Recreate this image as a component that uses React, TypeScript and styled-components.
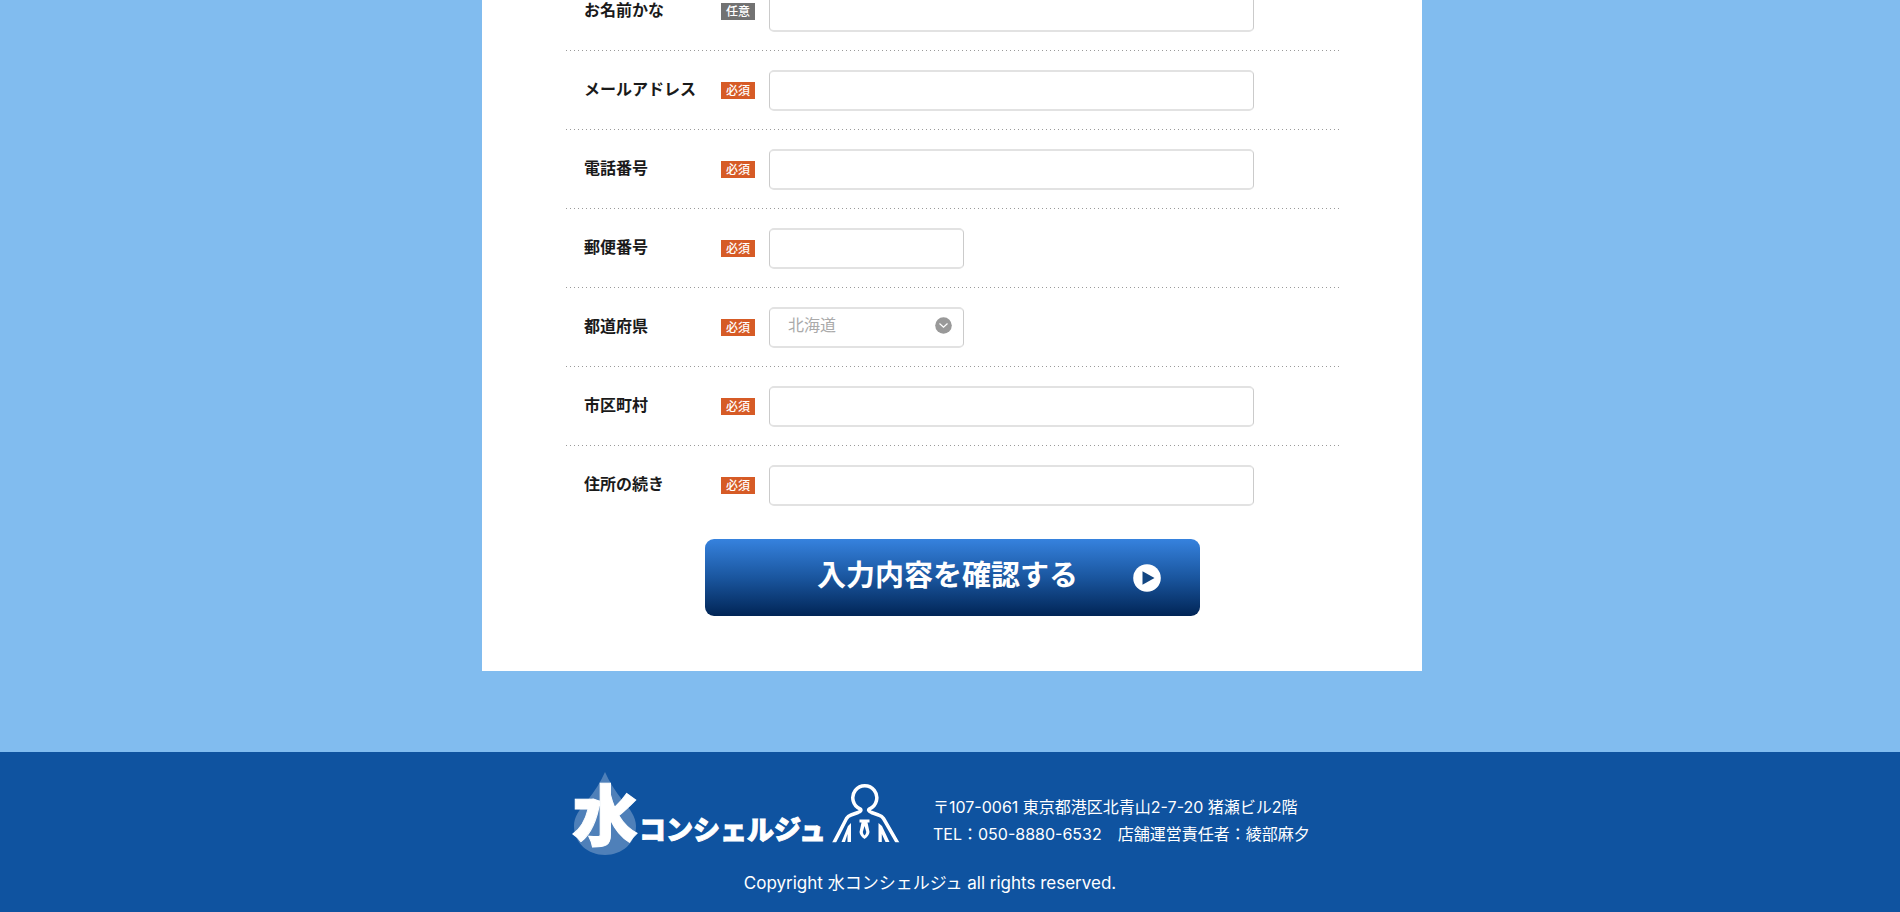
import React from "react";
import styled, { createGlobalStyle } from "styled-components";

const GlobalStyle = createGlobalStyle`
  *, *::before, *::after { box-sizing: border-box; }
  body {
    margin: 0;
    background: #81bcef;
    color: #1a1a1a;
    font-family: Inter, "Noto Sans CJK JP", sans-serif;
    font-size: 16px;
  }
`;

const Page = styled.div`
  overflow: hidden;
`;

const Main = styled.main`
  padding: 0 0 81px 4px;
`;

const Card = styled.form`
  max-width: 940px;
  margin: -28px auto 0;
  padding: 0 83px 55px 84px;
  background: #fff;
`;

const Row = styled.div`
  display: grid;
  grid-template-columns: 137px 48px 1fr;
  align-items: center;
  padding: 19px 0 19px 18px;
  background: repeating-linear-gradient(90deg, #9a9a9a 0 1px, transparent 1px 4px) left bottom / 100% 1px no-repeat;

  &:last-of-type {
    background: none;
  }
`;

const Label = styled.label`
  font-weight: 700;
  line-height: 24px;
  padding-bottom: 4px;
`;

const Badge = styled.span<{ $optional?: boolean }>`
  width: 34px;
  height: 17px;
  line-height: 17px;
  text-align: center;
  font-size: 12px;
  font-weight: 500;
  color: #fff;
  background: ${(p) => (p.$optional ? "#727272" : "#d65b26")};
`;

const fieldBox = `
  height: 41px;
  border: solid;
  border-width: 2px 1px;
  border-color: #e2e2e2 #cbcbcb;
  border-radius: 5px;
  background: #fff;
  font: inherit;
`;

const Input = styled.input<{ $short?: boolean }>`
  ${fieldBox}
  width: 100%;
  max-width: ${(p) => (p.$short ? 195 : 485)}px;
  padding: 0 18px;
`;

const SelectWrap = styled.div`
  position: relative;
  width: 100%;
  max-width: 195px;
  height: 41px;

  svg {
    position: absolute;
    right: 12px;
    top: 10px;
    pointer-events: none;
  }
`;

const Select = styled.select`
  ${fieldBox}
  display: block;
  width: 100%;
  appearance: none;
  padding: 0 36px 5px 18px;
  color: #aaa;
`;

const Submit = styled.button`
  display: grid;
  grid-template-columns: 1fr auto 1fr;
  align-items: center;
  width: 100%;
  max-width: 495px;
  height: 77px;
  margin: 14px auto 0;
  padding: 0 39px 0 29px;
  border: 0;
  border-radius: 9px;
  background: linear-gradient(#3682de, #1a569f 50%, #012556);
  color: #fff;
  font: inherit;
  font-size: 29px;
  font-weight: 700;
  line-height: 40px;

  span {
    grid-column: 2;
    padding-bottom: 4px;
  }

  svg {
    justify-self: end;
  }
`;

const Footer = styled.footer`
  padding: 20px 0 18px 4px;
  background: #0f53a0;
  color: #fff;
`;

const FooterInner = styled.div`
  max-width: 760px;
  margin: 0 auto;
`;

const Company = styled.div`
  display: flex;
  align-items: center;
  gap: 31px;

  svg {
    flex: none;
    overflow: visible;
  }
`;

const Address = styled.address`
  font-style: normal;
  line-height: 27px;
  padding-top: 13px;
  white-space: nowrap;
`;

const Copyright = styled.p`
  margin: 15px 0 0;
  padding-right: 44px;
  text-align: center;
  font-size: 17px;
  line-height: 24px;
`;

type Field = { id: string; label: string; optional?: boolean; short?: boolean; select?: boolean };

const fields: Field[] = [
  { id: "kana", label: "お名前かな", optional: true },
  { id: "email", label: "メールアドレス" },
  { id: "tel", label: "電話番号" },
  { id: "zip", label: "郵便番号", short: true },
  { id: "pref", label: "都道府県", select: true },
  { id: "city", label: "市区町村" },
  { id: "address", label: "住所の続き" },
];

const ChevronCircle = () => (
  <svg width="17" height="17" viewBox="0 0 17 17" aria-hidden="true">
    <circle cx="8.5" cy="8.5" r="8.3" fill="#999" />
    <path d="M4.500 6.500l4 3.600 4-3.600" fill="none" stroke="#fff" strokeWidth="1.2" />
  </svg>
);

const PlayCircle = () => (
  <svg width="28" height="28" viewBox="0 0 28 28" aria-hidden="true">
    <circle cx="14" cy="14" r="13.8" fill="#fff" />
    <path d="M9.5 7.3v13.4l12-6.7z" fill="#124682" />
  </svg>
);

const Logo = () => (
  <svg width="330" height="84" viewBox="0 0 330 84" role="img" aria-label="水コンシェルジュ">
    <clipPath id="figure">
      <rect x="255" y="0" width="75" height="70.3" />
    </clipPath>
    <path d="M33 0C29 9 23 19 15 29 7 38 2 45 2 54c0 17 14 29 31 29s31-12 31-29c0-9-6-17-13-25C43 19 37 9 33 0z" fill="#4f80b9" />
    <g fill="#fff" fontFamily='"Noto Sans CJK JP", sans-serif' fontWeight="900">
      <text x="0" y="68" fontSize="66" stroke="#fff" strokeWidth="1">水</text>
      <text x="67" y="68" fontSize="27" stroke="#fff" strokeWidth="1">コンシェルジュ</text>
    </g>
    <g clipPath="url(#figure)">
      <path
        d="M260.800 73L274.500 46.500Q276 44 279 43L286 40.500Q290.500 38.500 288 36.800A12 12 0 1 1 297.600 36.800Q295 38.500 299.500 40.500L306.500 43Q310 44 311.500 46.500L326.800 73"
        fill="none"
        stroke="#fff"
        strokeWidth="3.500"
        strokeLinejoin="round"
      />
    </g>
    <g fill="#fff">
      <path d="M269.500 70L276 54 279 51V70H275.500V62L273 70z" />
      <path d="M306.500 70V51L310 54 317.500 70H313.500L309.800 62V70z" />
      <path fillRule="evenodd" d="M287.500 47.500H297.500V50.500H295.500L297.500 60Q297 64 292.500 67 288 64 287.500 60L289.500 50.500H287.500zM292.500 54L290.800 60Q291 62 292.500 63.500 294 62 294.300 60z" />
    </g>
  </svg>
);

export default function App() {
  return (
    <Page>
      <GlobalStyle />
      <Main>
        <Card onSubmit={(e: React.FormEvent) => e.preventDefault()}>
          {fields.map((f) => (
            <Row key={f.id}>
              <Label htmlFor={f.id}>{f.label}</Label>
              <Badge $optional={f.optional}>{f.optional ? "任意" : "必須"}</Badge>
              {f.select ? (
                <SelectWrap>
                  <Select id={f.id} defaultValue="北海道">
                    <option>北海道</option>
                  </Select>
                  <ChevronCircle />
                </SelectWrap>
              ) : (
                <Input id={f.id} name={f.id} $short={f.short} />
              )}
            </Row>
          ))}
          <Submit type="submit">
            <span>入力内容を確認する</span>
            <PlayCircle />
          </Submit>
        </Card>
      </Main>
      <Footer>
        <FooterInner>
          <Company>
            <Logo />
            <Address>
              〒107-0061 東京都港区北青山2-7-20 猪瀬ビル2階
              <br />
              TEL：050-8880-6532　店舗運営責任者：綾部麻夕
            </Address>
          </Company>
          <Copyright>Copyright 水コンシェルジュ all rights reserved.</Copyright>
        </FooterInner>
      </Footer>
    </Page>
  );
}
